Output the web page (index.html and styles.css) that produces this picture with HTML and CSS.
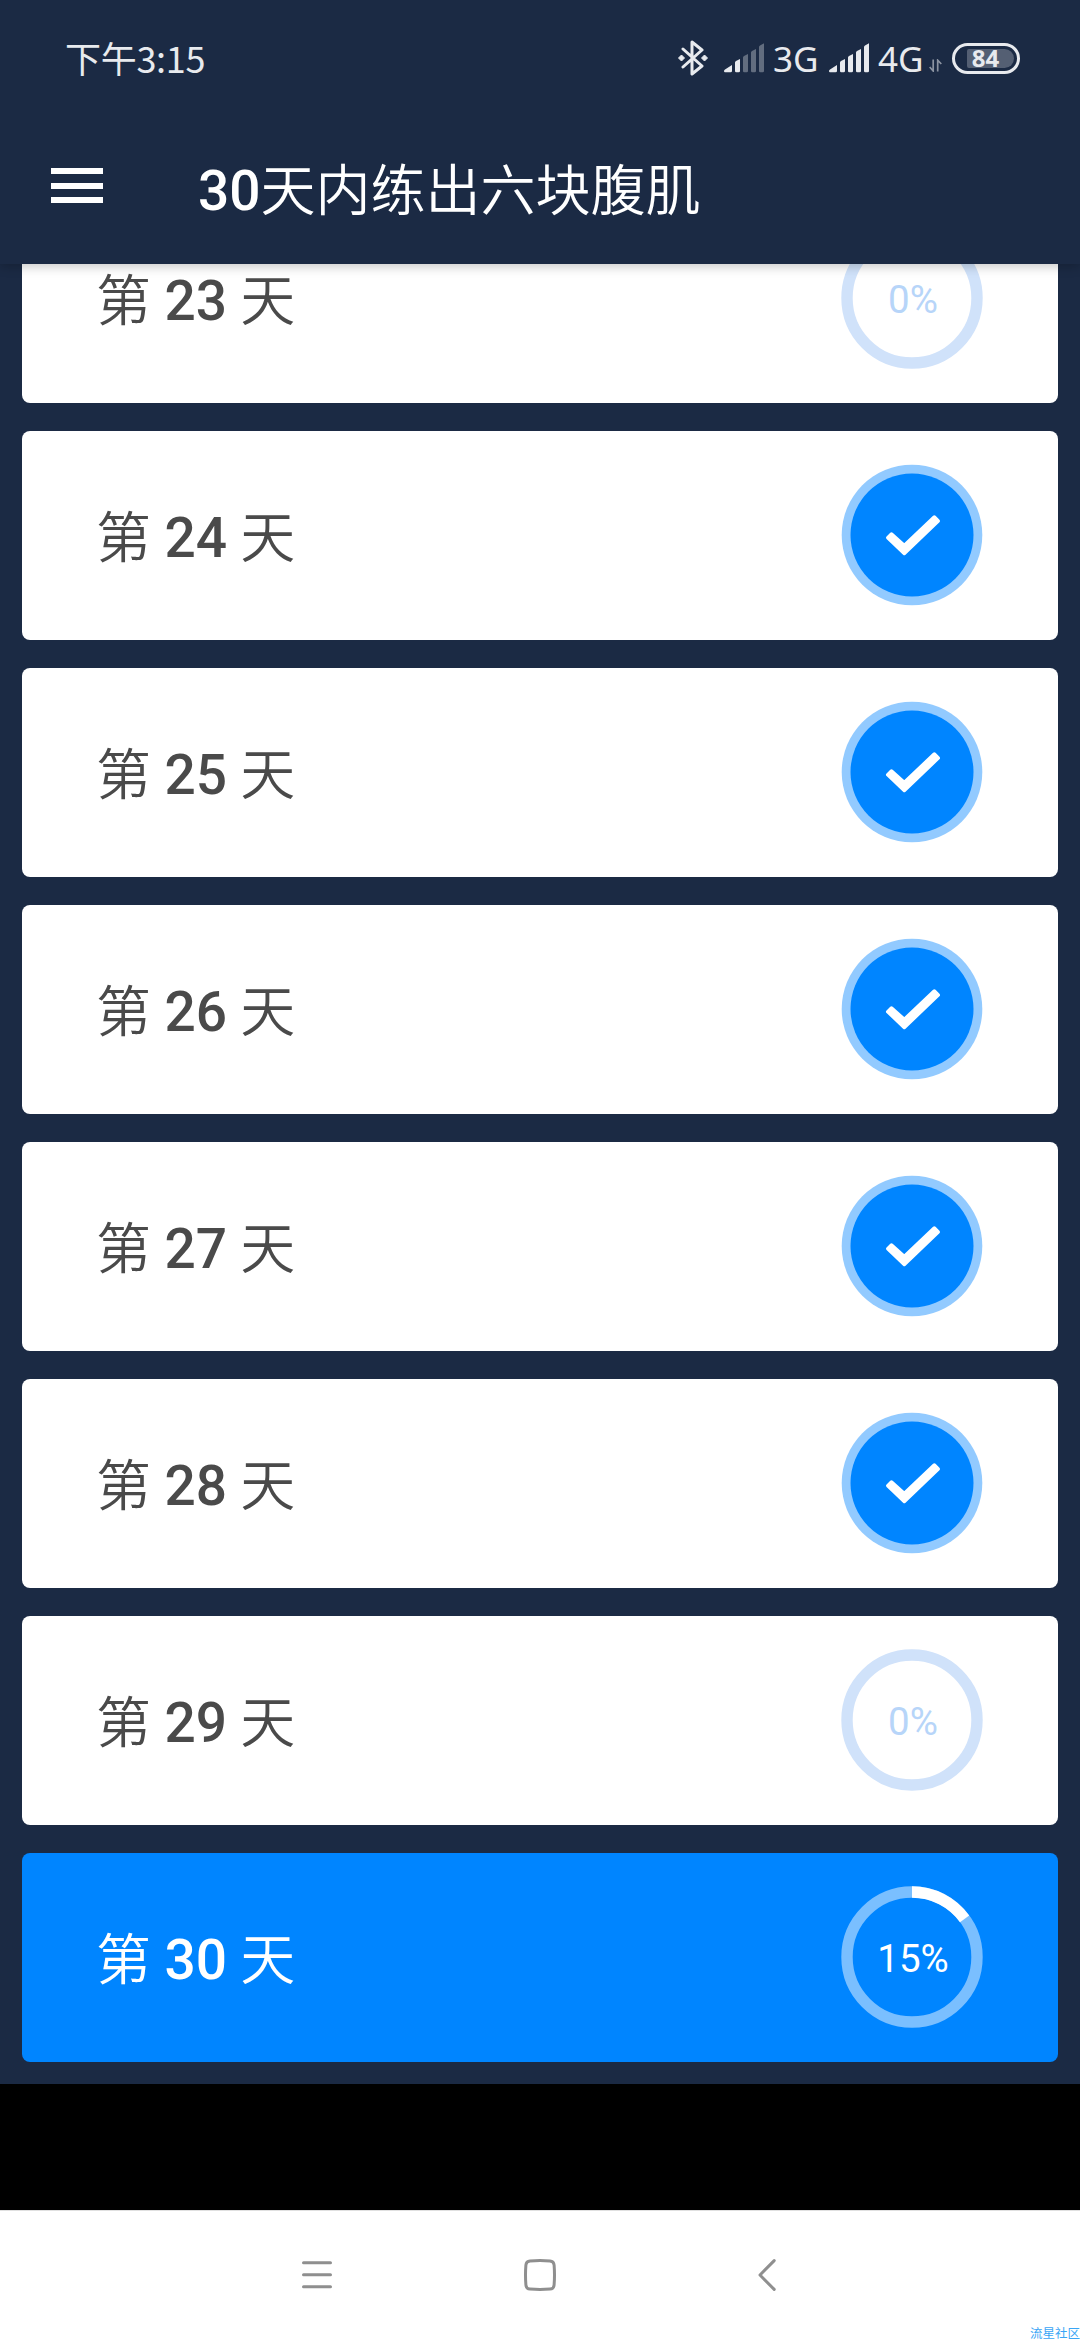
FILE: index.html
```html
<!DOCTYPE html>
<html lang="zh-CN">
<head>
<meta charset="utf-8">
<title>30天内练出六块腹肌</title>
<link rel="stylesheet" href="styles.css">
</head>
<body>
<svg class="defs" aria-hidden="true">
  <symbol id="check" viewBox="-71 -71 142 142">
    <circle r="70.3" fill="#92caff"/>
    <circle r="61.5" fill="#0085ff"/>
    <path d="M-24.2 2.7L-20.5-.9L-7.7 10.5L22.3-17.9L26.2-14L-7.7 18.4Z" fill="#fff" stroke="#fff" stroke-width="3.6" stroke-linejoin="round"/>
  </symbol>
  <symbol id="ring" viewBox="-71 -71 142 142">
    <circle r="65" fill="none" stroke="currentColor" stroke-width="11.4"/>
  </symbol>
</svg>
<div class="screen">
  <header class="header">
    <div class="status">
      <span class="time">下午3:15</span>
      <div class="indicators">
        <svg class="bluetooth" width="30" height="36" viewBox="0 0 30 36"><path d="M5 9L24 26L14 34V2L24 10L5 27" fill="none" stroke="currentColor" stroke-width="3" stroke-linejoin="round" stroke-linecap="round"/><path d="M3.500 15L6.500 18L3.500 21L.5 18ZM26.500 15L29.500 18L26.500 21L23.500 18Z" fill="currentColor" stroke="currentColor"/></svg>
        <svg class="signal-one" width="41" height="30" viewBox="0 0 41 30" fill="currentColor"><path d="M0 28Q0 27 1 26.500L8 22V28Q8 29.300 6.500 29.300H1Q0 29.300 0 28ZM11 19.500Q11 18.500 12 18L16 16V28Q16 29.300 14.700 29.300H12.300Q11 29.300 11 28Z"/><path opacity=".35" d="M19 14.500Q19 13.500 20 13L24 11V28Q24 29.300 22.700 29.300H20.300Q19 29.300 19 28ZM27 9.500Q27 8.500 28 8L32 6V28Q32 29.300 30.700 29.300H28.300Q27 29.300 27 28ZM35 4Q35 3 36 2.500L40 .3V28Q40 29.300 38.700 29.300H36.300Q35 29.300 35 28Z"/></svg>
        <span class="network">3G</span>
        <svg class="signal-two" width="41" height="30" viewBox="0 0 41 30" fill="currentColor"><path d="M0 28Q0 27 1 26.500L8 22V28Q8 29.300 6.500 29.300H1Q0 29.300 0 28ZM11 19.500Q11 18.500 12 18L16 16V28Q16 29.300 14.700 29.300H12.300Q11 29.300 11 28ZM19 14.500Q19 13.500 20 13L24 11V28Q24 29.300 22.700 29.300H20.300Q19 29.300 19 28ZM27 9.500Q27 8.500 28 8L32 6V28Q32 29.300 30.700 29.300H28.300Q27 29.300 27 28ZM35 4Q35 3 36 2.500L40 .3V28Q40 29.300 38.700 29.300H36.300Q35 29.300 35 28Z"/></svg>
        <span class="network">4G</span>
        <svg class="traffic" width="13" height="13" viewBox="0 0 13 13"><path d="M4.200.5V12L.7 8M8.700 12.500V1.200L12.300 5" fill="none" stroke="currentColor" stroke-width="1.700"/></svg>
        <div class="battery"><span class="charge"></span><span class="level">84</span></div>
      </div>
    </div>
    <div class="toolbar">
      <div class="menu"><i></i><i></i><i></i></div>
      <h1 class="title"><b>30</b>天内练出六块腹肌</h1>
    </div>
  </header>
  <main class="days">
    <section class="day"><span class="label">第 <b>23</b> 天</span><div class="dial"><svg><use href="#ring"/></svg><span>0%</span></div></section>
    <section class="day"><span class="label">第 <b>24</b> 天</span><div class="dial"><svg><use href="#check"/></svg></div></section>
    <section class="day"><span class="label">第 <b>25</b> 天</span><div class="dial"><svg><use href="#check"/></svg></div></section>
    <section class="day"><span class="label">第 <b>26</b> 天</span><div class="dial"><svg><use href="#check"/></svg></div></section>
    <section class="day"><span class="label">第 <b>27</b> 天</span><div class="dial"><svg><use href="#check"/></svg></div></section>
    <section class="day"><span class="label">第 <b>28</b> 天</span><div class="dial"><svg><use href="#check"/></svg></div></section>
    <section class="day"><span class="label">第 <b>29</b> 天</span><div class="dial"><svg><use href="#ring"/></svg><span>0%</span></div></section>
    <section class="day current"><span class="label">第 <b>30</b> 天</span><div class="dial"><svg viewBox="-71 -71 142 142"><circle class="track" r="65"/><circle class="progress" r="65" pathLength="100" stroke-dasharray="15 100"/></svg><span>15%</span></div></section>
  </main>
  <div class="ad"></div>
  <nav class="nav">
    <svg width="36" height="38" viewBox="0 0 36 38"><path d="M4.500 6.700H31.500M4.500 18.700H31.500M4.500 30.700H31.500"/></svg>
    <svg width="36" height="38" viewBox="0 0 36 38"><path d="M8 4.900Q18 4.100 28 4.900Q31.800 5.200 32.100 9Q32.900 19 32.100 29Q31.800 32.800 28 33.100Q18 33.900 8 33.100Q4.200 32.800 3.900 29Q3.100 19 3.900 9Q4.200 5.200 8 4.900Z"/></svg>
    <svg width="36" height="38" viewBox="0 0 36 38"><path d="M25.200 4.600L11 19L25.200 33.400"/></svg>
    <span class="watermark">流星社区</span>
  </nav>
</div>
</body>
</html>
```
FILE: styles.css
```css
* { box-sizing: border-box; }
body {
  margin: 0;
  background: #1b2a44;
  font-family: Roboto, "Noto Sans CJK SC", sans-serif;
}
svg { display: block; flex: none; }
.defs { position: absolute; width: 0; height: 0; }
.screen {
  display: flex;
  flex-direction: column;
  width: 1080px;
  height: 2340px;
  overflow: hidden;
}
.header {
  position: relative;
  z-index: 1;
  flex: none;
  height: 264px;
  background: #1b2a44;
  color: #fff;
  box-shadow: 0 2px 11px rgba(0, 0, 0, .24);
}
.status {
  display: flex;
  justify-content: space-between;
  align-items: center;
  height: 116px;
  padding: 0 60px 0 65px;
  color: #e8eaee;
}
.time {
  margin-bottom: 2px;
  font: 400 36px/44px "Noto Sans CJK SC", sans-serif;
  letter-spacing: -.3px;
}
.indicators { display: flex; align-items: center; }
.signal-one { margin-left: 16px; }
.signal-two { margin-left: 9px; }
.network {
  width: 47px;
  margin: 2px 0 0 8px;
  font: 400 35px/40px "Noto Sans", sans-serif;
}
.traffic { margin: 14px 0 0 4px; opacity: .55; }
.battery {
  display: grid;
  place-items: center;
  width: 68px;
  height: 31px;
  margin-left: 10px;
  border: 3.500px solid currentColor;
  border-radius: 16px;
}
.charge, .level { grid-area: 1 / 1; }
.charge {
  justify-self: end;
  width: 47px;
  height: 19px;
  margin-right: 3px;
  border-radius: 2px 10px 10px 2px;
  background: #545f73;
}
.level {
  margin-right: 1px;
  font: 700 24px/24px "Noto Sans", sans-serif;
}
.toolbar {
  display: flex;
  align-items: center;
  gap: 95px;
  height: 148px;
  padding: 0 51px;
}
.menu {
  display: grid;
  gap: 8.500px;
  width: 52px;
  margin-bottom: 9px;
}
.menu i { height: 6px; background: #fff; }
.title {
  margin: 1px 0 0;
  font-size: 55px;
  font-weight: 350;
  line-height: 64px;
}
b { font-weight: 500; }
.days {
  display: flex;
  flex: none;
  flex-direction: column;
  justify-content: flex-end;
  gap: 28px;
  height: 1820px;
  padding: 0 22px 22px;
}
.day {
  display: flex;
  flex: none;
  justify-content: space-between;
  align-items: center;
  height: 209px;
  padding: 0 75px 0 74px;
  border-radius: 8px;
  background: #fff;
  color: #4a4a4a;
}
.label {
  margin-top: 5px;
  font-size: 55px;
  font-weight: 350;
  line-height: 64px;
  white-space: pre;
}
.dial {
  display: grid;
  place-items: center;
  width: 142px;
  height: 142px;
  margin-bottom: 2px;
  color: #d0e2fa;
}
.dial svg, .dial span { grid-area: 1 / 1; }
.dial svg { width: 142px; height: 142px; }
.dial span {
  z-index: 1;
  margin: 4px 0 0 2px;
  color: #b7d5f9;
  font-size: 38.500px;
  line-height: 46px;
}
.current { background: #0085ff; color: #fff; }
.current .dial span { color: #fff; }
.track, .progress { fill: none; stroke: #7abfff; stroke-width: 11.400; }
.progress { stroke: #fff; transform: rotate(-90deg); }
.ad { flex: none; height: 126px; background: #000; }
.nav {
  position: relative;
  display: flex;
  flex: none;
  gap: 187px;
  height: 130px;
  padding: 45px 0 0 299px;
  border-top: 1px solid #e0e0e0;
  background: #fff;
}
.nav svg { fill: none; stroke: #8f8f8f; stroke-width: 3; stroke-linecap: round; stroke-linejoin: round; }
.nav svg:nth-child(3) { margin-left: 4px; }
.watermark {
  position: absolute;
  right: 0;
  bottom: 0;
  color: #3aa5f5;
  font: 12.500px/14px "Noto Sans CJK SC", sans-serif;
}
```
